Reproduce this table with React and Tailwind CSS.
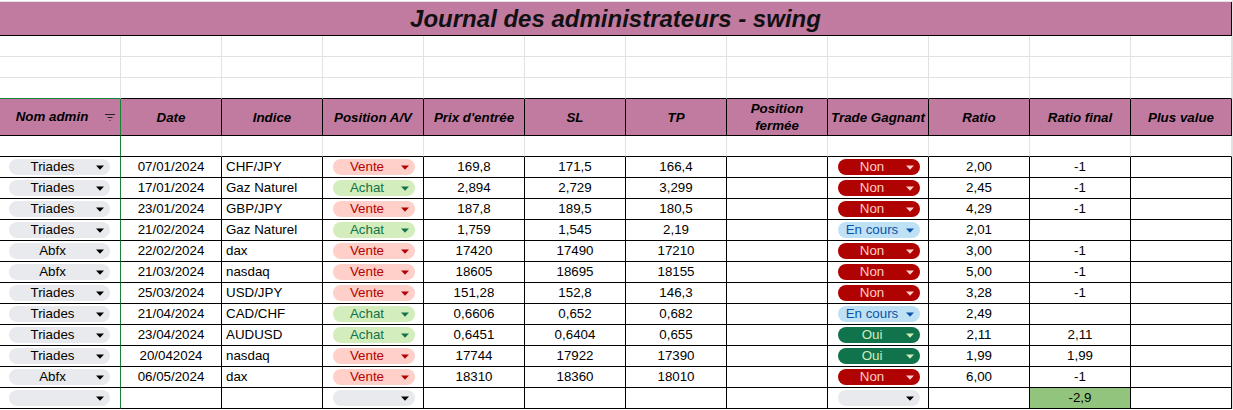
import React from "react";

const ROW = "grid grid-cols-[121px_repeat(11,101px)]";

const chipStyles = {
  admin: { box: "bg-[#e8eaed] w-[101px] ml-[9px]", text: "text-black", arrow: "#000000" },
  empty: { box: "bg-[#e8eaed] w-[82px] ml-[10px]", text: "text-black", arrow: "#000000" },
  Vente: { box: "bg-[#ffcfc9] w-[82px] ml-[10px]", text: "text-[#b10202]", arrow: "#b10202" },
  Achat: { box: "bg-[#d4edbc] w-[82px] ml-[10px]", text: "text-[#11734b]", arrow: "#11734b" },
  Non: { box: "bg-[#b10202] w-[82px] ml-[10px]", text: "text-[#ffcfc9]", arrow: "#ffcfc9" },
  Oui: { box: "bg-[#11734b] w-[82px] ml-[10px]", text: "text-[#d4edbc]", arrow: "#d4edbc" },
  "En cours": { box: "bg-[#bfe1f6] w-[82px] ml-[10px]", text: "text-[#0a53a8]", arrow: "#0a53a8" },
};

const trades = [
  ["Triades", "07/01/2024", "CHF/JPY", "Vente", "169,8", "171,5", "166,4", "Non", "2,00", "-1"],
  ["Triades", "17/01/2024", "Gaz Naturel", "Achat", "2,894", "2,729", "3,299", "Non", "2,45", "-1"],
  ["Triades", "23/01/2024", "GBP/JPY", "Vente", "187,8", "189,5", "180,5", "Non", "4,29", "-1"],
  ["Triades", "21/02/2024", "Gaz Naturel", "Achat", "1,759", "1,545", "2,19", "En cours", "2,01", ""],
  ["Abfx", "22/02/2024", "dax", "Vente", "17420", "17490", "17210", "Non", "3,00", "-1"],
  ["Abfx", "21/03/2024", "nasdaq", "Vente", "18605", "18695", "18155", "Non", "5,00", "-1"],
  ["Triades", "25/03/2024", "USD/JPY", "Vente", "151,28", "152,8", "146,3", "Non", "3,28", "-1"],
  ["Triades", "21/04/2024", "CAD/CHF", "Achat", "0,6606", "0,652", "0,682", "En cours", "2,49", ""],
  ["Triades", "23/04/2024", "AUDUSD", "Achat", "0,6451", "0,6404", "0,655", "Oui", "2,11", "2,11"],
  ["Triades", "20/042024", "nasdaq", "Vente", "17744", "17922", "17390", "Oui", "1,99", "1,99"],
  ["Abfx", "06/05/2024", "dax", "Vente", "18310", "18360", "18010", "Non", "6,00", "-1"],
];

const headers = [
  "Date",
  "Indice",
  "Position A/V",
  "Prix d'entrée",
  "SL",
  "TP",
  "Position fermée",
  "Trade Gagnant",
  "Ratio",
  "Ratio final",
  "Plus value",
];

const Arrow = ({ color }) => (
  <svg width="8" height="5" viewBox="0 0 8 5" className="shrink-0">
    <path d="M0 0.5h8L4 4.8z" fill={color} />
  </svg>
);

const Chip = ({ label, kind }) => {
  const s = chipStyles[kind];
  return (
    <div className={`flex h-[16px] items-center rounded-full pr-[6px] ${s.box}`}>
      <span className={`flex-1 text-center leading-[16px] ${s.text}`}>{label}</span>
      <Arrow color={s.arrow} />
    </div>
  );
};

const FilterIcon = () => (
  <svg width="12" height="8" viewBox="0 0 12 8" className="mr-[4px] shrink-0">
    <path d="M1 1.5h10M3.5 4.5h5M5.5 7.5h1" stroke="#222" strokeWidth="1.1" />
  </svg>
);

const EmptyRow = ({ last }) => (
  <div className={`${ROW} h-[21px]`}>
    {Array.from({ length: 12 }).map((_, i) => (
      <div
        key={i}
        className={`border-r border-b border-r-[#e2e2e2] ${
          last ? (i === 0 ? "border-b-[#188038]" : "border-b-black") : "border-b-[#e2e2e2]"
        }`}
      />
    ))}
  </div>
);

const cellBase = "flex h-full items-center border-r border-b border-black";
const firstCell = "flex h-full items-center border-r border-b border-b-black border-r-[#188038]";

export default function App() {
  return (
    <div className="w-[1233px] h-[410px] overflow-hidden bg-white font-['Liberation_Sans',Arial,sans-serif] text-[13.33px] text-black">
      <div className="w-[1233px] border-r border-[#e2e2e2]">
        {/* top sliver */}
        <div className="h-[2px] border-b border-[#e2e2e2]" />

        {/* titre */}
        <div className="flex h-[34px] w-[1232px] items-center justify-center border-r border-b border-black bg-[#c27ba0]">
          <h1 className="text-[24px] font-bold italic leading-none text-[#111]">
            Journal des administrateurs - swing
          </h1>
        </div>

        <EmptyRow />
        <EmptyRow />
        <EmptyRow last />

        {/* Header */}
        <div className={`${ROW} h-[37px] bg-[#c27ba0] font-bold italic`}>
          <div className={firstCell}>
            <span className="flex-1 text-center">Nom admin</span>
            <FilterIcon />
          </div>
          {headers.map((h) => (
            <div key={h} className={`${cellBase} justify-center px-[2px] text-center leading-[17px]`}>
              {h === "Position fermée" ? (
                <span>
                  Position
                  <br />
                  fermée
                </span>
              ) : (
                <span className="whitespace-nowrap">{h}</span>
              )}
            </div>
          ))}
        </div>

        {/* spacer row */}
        <div className={`${ROW} h-[21px]`}>
          {Array.from({ length: 12 }).map((_, i) => (
            <div
              key={i}
              className={`border-r border-b border-b-black ${i === 0 ? "border-r-[#188038]" : "border-r-[#e2e2e2]"}`}
            />
          ))}
        </div>

        {/* LIST */}
        {trades.map((t, idx) => (
          <div key={idx} className={`${ROW} h-[21px]`}>
            <div className={firstCell}>
              <Chip label={t[0]} kind="admin" />
            </div>
            <div className={`${cellBase} justify-center`}>{t[1]}</div>
            <div className={`${cellBase} pl-[4px]`}>{t[2]}</div>
            <div className={cellBase}>
              <Chip label={t[3]} kind={t[3]} />
            </div>
            <div className={`${cellBase} justify-center`}>{t[4]}</div>
            <div className={`${cellBase} justify-center`}>{t[5]}</div>
            <div className={`${cellBase} justify-center`}>{t[6]}</div>
            <div className={cellBase} />
            <div className={cellBase}>
              <Chip label={t[7]} kind={t[7]} />
            </div>
            <div className={`${cellBase} justify-center`}>{t[8]}</div>
            <div className={`${cellBase} justify-center`}>{t[9]}</div>
            <div className={cellBase} />
          </div>
        ))}

        {/* total row */}
        <div className={`${ROW} h-[21px]`}>
          <div className={firstCell}>
            <Chip label="" kind="admin" />
          </div>
          <div className={cellBase} />
          <div className={cellBase} />
          <div className={cellBase}>
            <Chip label="" kind="empty" />
          </div>
          <div className={cellBase} />
          <div className={cellBase} />
          <div className={cellBase} />
          <div className={cellBase} />
          <div className={cellBase}>
            <Chip label="" kind="empty" />
          </div>
          <div className={cellBase} />
          <div className={`${cellBase} justify-center bg-[#93c47d]`}>-2,9</div>
          <div className={cellBase} />
        </div>
      </div>
    </div>
  );
}
